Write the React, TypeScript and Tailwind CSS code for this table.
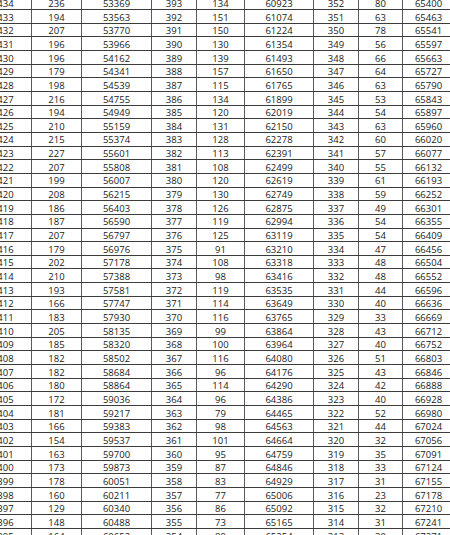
const rows: string[][] = [
  ['434', '236', '53369', '393', '134', '60923', '352', '80', '65400'],
  ['433', '194', '53563', '392', '151', '61074', '351', '63', '65463'],
  ['432', '207', '53770', '391', '150', '61224', '350', '78', '65541'],
  ['431', '196', '53966', '390', '130', '61354', '349', '56', '65597'],
  ['430', '196', '54162', '389', '139', '61493', '348', '66', '65663'],
  ['429', '179', '54341', '388', '157', '61650', '347', '64', '65727'],
  ['428', '198', '54539', '387', '115', '61765', '346', '63', '65790'],
  ['427', '216', '54755', '386', '134', '61899', '345', '53', '65843'],
  ['426', '194', '54949', '385', '120', '62019', '344', '54', '65897'],
  ['425', '210', '55159', '384', '131', '62150', '343', '63', '65960'],
  ['424', '215', '55374', '383', '128', '62278', '342', '60', '66020'],
  ['423', '227', '55601', '382', '113', '62391', '341', '57', '66077'],
  ['422', '207', '55808', '381', '108', '62499', '340', '55', '66132'],
  ['421', '199', '56007', '380', '120', '62619', '339', '61', '66193'],
  ['420', '208', '56215', '379', '130', '62749', '338', '59', '66252'],
  ['419', '186', '56403', '378', '126', '62875', '337', '49', '66301'],
  ['418', '187', '56590', '377', '119', '62994', '336', '54', '66355'],
  ['417', '207', '56797', '376', '125', '63119', '335', '54', '66409'],
  ['416', '179', '56976', '375', '91', '63210', '334', '47', '66456'],
  ['415', '202', '57178', '374', '108', '63318', '333', '48', '66504'],
  ['414', '210', '57388', '373', '98', '63416', '332', '48', '66552'],
  ['413', '193', '57581', '372', '119', '63535', '331', '44', '66596'],
  ['412', '166', '57747', '371', '114', '63649', '330', '40', '66636'],
  ['411', '183', '57930', '370', '116', '63765', '329', '33', '66669'],
  ['410', '205', '58135', '369', '99', '63864', '328', '43', '66712'],
  ['409', '185', '58320', '368', '100', '63964', '327', '40', '66752'],
  ['408', '182', '58502', '367', '116', '64080', '326', '51', '66803'],
  ['407', '182', '58684', '366', '96', '64176', '325', '43', '66846'],
  ['406', '180', '58864', '365', '114', '64290', '324', '42', '66888'],
  ['405', '172', '59036', '364', '96', '64386', '323', '40', '66928'],
  ['404', '181', '59217', '363', '79', '64465', '322', '52', '66980'],
  ['403', '166', '59383', '362', '98', '64563', '321', '44', '67024'],
  ['402', '154', '59537', '361', '101', '64664', '320', '32', '67056'],
  ['401', '163', '59700', '360', '95', '64759', '319', '35', '67091'],
  ['400', '173', '59873', '359', '87', '64846', '318', '33', '67124'],
  ['399', '178', '60051', '358', '83', '64929', '317', '31', '67155'],
  ['398', '160', '60211', '357', '77', '65006', '316', '23', '67178'],
  ['397', '129', '60340', '356', '86', '65092', '315', '32', '67210'],
  ['396', '148', '60488', '355', '73', '65165', '314', '31', '67241'],
  ['395', '164', '60652', '354', '89', '65254', '313', '30', '67271'],
];

// fixed column widths, left to right
const colClasses = [
  'w-[52px]',
  'w-[50px]',
  'w-[70px]',
  'w-[45px]',
  'w-[48px]',
  'w-[69px]',
  'w-[45px]',
  'w-[44px]',
  'w-[52px]',
];

export default function App() {
  return (
    <div className="h-[535px] w-[450px] overflow-hidden bg-white font-['Open_Sans',sans-serif] text-[9.5px] text-[#1a1a1a]">
      <div className="-ml-[20px] -mt-[3.667px] flex w-max flex-col">
        {rows.map((r) => (
          <div key={r[0]} className="flex h-[13.667px] border-b border-[#3c3c3c]">
            {r.map((cell, i) => (
              <div
                key={i}
                className={`${colClasses[i]} flex shrink-0 items-center justify-center border-r border-[#5a5a5a] pt-[2px] leading-none`}
              >
                {cell}
              </div>
            ))}
          </div>
        ))}
      </div>
    </div>
  );
}
